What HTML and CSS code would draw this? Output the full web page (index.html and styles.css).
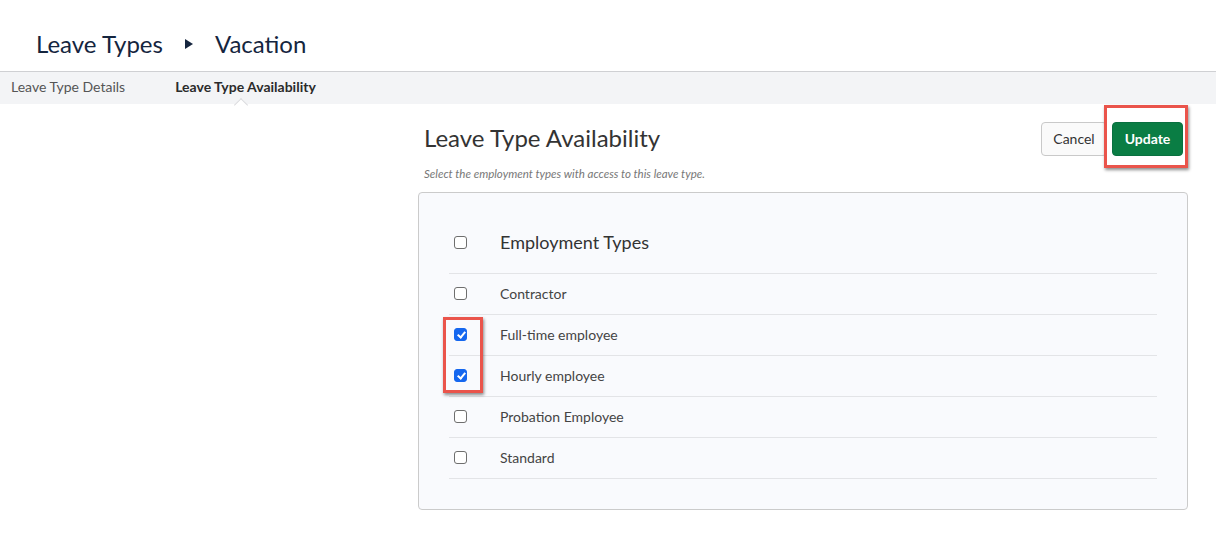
FILE: index.html
```html
<!DOCTYPE html>
<html lang="en">
<head>
<meta charset="utf-8">
<title>Vacation - Leave Types</title>
<link rel="stylesheet" href="styles.css">
</head>
<body>
<header class="page-header">
  <h1 class="crumbs">
    <span class="crumb">Leave Types</span>
    <span class="crumb-sep"></span>
    <span class="crumb">Vacation</span>
  </h1>
</header>
<nav class="tabs">
  <span class="tab">Leave Type Details</span>
  <span class="tab tab-active">Leave Type Availability</span>
</nav>
<main class="main">
  <div class="side"></div>
  <section class="content">
    <div class="content-head">
      <h2 class="content-title">Leave Type Availability</h2>
      <div class="actions">
        <button class="btn btn-cancel">Cancel</button>
        <button class="btn btn-update">Update</button>
        <span class="annot annot-update"></span>
      </div>
    </div>
    <p class="hint">Select the employment types with access to this leave type.</p>
    <div class="panel">
      <ul class="types">
        <li class="type-row type-head"><span class="cb"></span><span class="head-label">Employment Types</span></li>
        <li class="type-row"><span class="cb"></span><span class="label">Contractor</span></li>
        <li class="type-row"><span class="cb cb-on"></span><span class="label">Full-time employee</span></li>
        <li class="type-row"><span class="cb cb-on"></span><span class="label">Hourly employee</span></li>
        <li class="type-row"><span class="cb"></span><span class="label">Probation Employee</span></li>
        <li class="type-row"><span class="cb"></span><span class="label">Standard</span></li>
      </ul>
      <span class="annot annot-checks"></span>
    </div>
  </section>
</main>
</body>
</html>
```

FILE: styles.css
```css
* { box-sizing: border-box; }
html, body { margin: 0; padding: 0; background: #fff; }
body { font-family: Lato, "Open Sans", sans-serif; color: #333; }

.page-header { height: 71px; padding: 29px 0 0 36px; }
.crumbs { margin: 0; font-size: 24px; font-weight: 400; line-height: 29px; color: #15253e; display: flex; align-items: center; }
.crumb-sep { width: 0; height: 0; border-top: 5px solid transparent; border-bottom: 5px solid transparent; border-left: 8px solid #15253e; margin: 0 22px 0 22px; }

.tabs { height: 33px; border-top: 1px solid #cfd0d3; background: #f3f4f6; display: flex; align-items: center; padding-left: 11px; gap: 50px; font-size: 14px; }
.tab { color: #555; position: relative; line-height: 30px; padding-bottom: 2px; }
.tab-active { color: #2b2b2b; font-weight: 700; }
.tab-active::after { content: ""; position: absolute; left: 50%; bottom: -1px; width: 9px; height: 9px; margin-left: -9px; background: #fff; border-left: 1px solid #dadbde; border-top: 1px solid #dadbde; transform: translateY(5px) rotate(45deg); }

.main { display: grid; grid-template-columns: 418px 770px; }
.content { position: relative; }
.content-head { display: flex; justify-content: space-between; align-items: flex-start; padding-top: 18px; height: 52px; }
.content-title { margin: 0 0 0 6px; font-size: 24px; font-weight: 400; line-height: 31px; color: #333; }
.actions { display: flex; gap: 5px; margin-right: 5px; position: relative; }
.btn { font-family: inherit; font-size: 14px; height: 34px; border-radius: 4px; cursor: pointer; padding: 0 0 1px; }
.btn-cancel { width: 66px; background: #fafafa; border: 1px solid #c9c9c9; color: #333; }
.btn-update { width: 71px; background: #0a7d44; border: 1px solid #097040; color: #fff; font-weight: 700; }

.hint { margin: 11px 0 0 6px; font-size: 11.5px; line-height: 14px; font-style: italic; color: #777; }

.panel { position: relative; margin-top: 11px; border: 1px solid #cbcbcb; border-radius: 4px; background: #f9fafd; padding: 30px; height: 318px; }
.types { list-style: none; margin: 0; padding: 0; }
.type-row { display: grid; grid-template-columns: 51px 1fr; align-items: center; height: 41px; padding-bottom: 2px; border-bottom: 1px solid #e3e4e7; }
.type-head { height: 51px; padding-bottom: 12px; }
.cb { width: 13px; height: 13px; margin-left: 5px; border: 1px solid #6e6e6e; border-radius: 3px; background: #fff; position: relative; }
.cb-on { background: #1567ef; border-color: #1567ef; }
.cb-on::after { content: ""; position: absolute; left: 3.5px; top: 1px; width: 3px; height: 6px; border: solid #fff; border-width: 0 2px 2px 0; transform: rotate(40deg); }
.head-label { font-size: 18px; color: #333; }
.label { font-size: 14px; color: #444; }

.annot { position: absolute; border: 3px solid #ea544b; box-shadow: 1px 2px 3px rgba(0,0,0,0.45); pointer-events: none; }
.annot-update { left: 63px; top: -17px; width: 84px; height: 63px; }
.annot-checks { left: 24px; top: 124px; width: 40px; height: 76px; }
```
